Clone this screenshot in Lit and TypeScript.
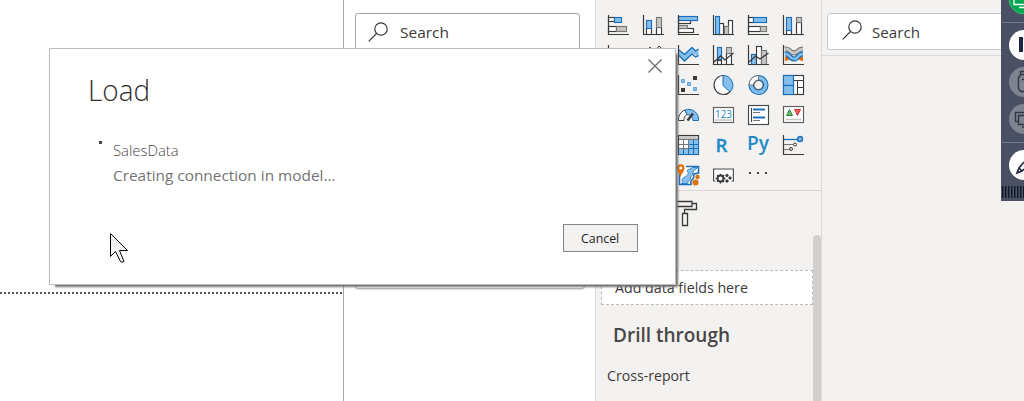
import { LitElement, html, svg, css } from "lit";
import { customElement } from "lit/decorators.js";

const D = "#3b3a39", B = "#1a6fb8", L = "#83beec", G = "#c8c6c4", M = "#797775", O = "#e07000";
const axis = svg`<path d="M.5 0V19.5H21" fill="none" stroke=${D} stroke-width="1.200"/>`;
const r = (x: number, y: number, w: number, h: number, f = "#fff", s = D) =>
  svg`<rect x=${x + 0.5} y=${y + 0.5} width=${w - 1} height=${h - 1} fill=${f} stroke=${s} stroke-width="1.150"/>`;

const icons = [
  svg`${r(0, 2, 7, 5)}${r(6, 2, 8, 6, L, B)}${r(0, 11, 9, 6)}${r(8, 11, 11, 6, G, M)}${axis}`,
  svg`${r(3, 12, 6, 8)}${r(3, 5, 6, 9, L, B)}${r(13, 12, 6, 8)}${r(13, 2, 6, 11, G, M)}${axis}`,
  svg`${r(0, 5, 13, 4)}${r(0, 1, 20, 5, L, B)}${r(0, 13, 16, 5)}${r(0, 10, 10, 4, G, M)}${axis}`,
  svg`${r(6, 8, 5, 12)}${r(2, 1, 5, 19, L, B)}${r(15, 5, 5, 15)}${r(11, 11, 5, 9, G, M)}${axis}`,
  svg`${r(0, 2, 6, 6)}${r(5, 2, 14, 6, L, B)}${r(0, 11, 13, 6)}${r(12, 11, 7, 6, G, M)}${axis}`,
  svg`${r(3, 15, 6, 5)}${r(3, 2, 6, 14, L, B)}${r(13, 7, 6, 13)}${r(13, 2, 6, 6, G, M)}${axis}`,
  svg`<path d="M1 15L7 8 12 13 20 7" fill="none" stroke=${B}/>${axis}`,
  svg`<path d="M1 12L7 2 11 7 16 1 20 5" fill="none" stroke=${D}/>`,
  svg`<path d="M1 5L6.5 9.5 14 2.5 17.5 6 20.5 3.5V13L17 9.5 14 9 6.500 16 1 10.500Z" fill=${L}/><path d="M1 5L6.500 9.500 14 2.500 17.500 6 20.500 4M1 10.500L6.500 16 14 9 17.500 12 20.500 10.500" fill="none" stroke=${B} stroke-width="1.300"/>${axis}`,
  svg`${r(4, 15, 5, 5)}${r(4, 2, 5, 13, L, B)}${r(13, 8, 6, 12)}${r(13, 2, 6, 7, G, M)}<path d="M1 17L7.500 11 12 15 20.500 8" fill="none" stroke=${D} stroke-width="1.300"/>${axis}`,
  svg`${r(3, 9, 6, 11, L, B)}${r(8, 1, 6, 19)}${r(13, 5, 6, 15, G, M)}<path d="M1 17L7.500 11 12 14 20.500 8" fill="none" stroke=${D} stroke-width="1.300"/>${axis}`,
  svg`<path d="M2 14C7 14 6 7 11 7S15 14 20 14" stroke=${O} stroke-width="4" fill="none"/><path d="M2 4C7 3 6 8 11 8S14 4 20 4" stroke=${M} stroke-width="5" fill="none"/><path d="M2 4C7 3 6 8 11 8S14 4 20 4" stroke=${G} stroke-width="3" fill="none"/><path d="M2 9C7 8 6 14 11 14S14 9 20 9" stroke=${B} stroke-width="5" fill="none"/><path d="M2 9C7 8 6 14 11 14S14 9 20 9" stroke=${L} stroke-width="2.500" fill="none"/>${axis}`,
  svg``,
  svg``,
  svg`<path d="M15 1h4v4h-4zM3 13h4v4H3z" fill=${D}/><g fill=${L} stroke="#4b98d2" stroke-width=".8"><path d="M3.500 4.500h3v3h-3zM9.500 7.500h3v3h-3zM15.500 12.500h3v3h-3z"/></g>${axis}`,
  svg`<circle cx="10.500" cy="10" r="9.500" fill="#fff"/><path d="M10 .5V10.500L17 17A9.700 9.700 0 0 0 10 .5Z" fill=${L} stroke=${B}/><path d="M10 .5A9.500 9.500 0 1 0 17 17" fill="none" stroke=${D} stroke-width="1.200"/>`,
  svg`<circle cx="10.500" cy="10" r="7.300" fill="none" stroke=${B} stroke-width="5.500"/><circle cx="10.500" cy="10" r="7.300" fill="none" stroke=${L} stroke-width="3.400"/><path d="M1 10A9.500 9.500 0 0 1 10.500.5V5A5 5 0 0 0 5.500 10Z" fill="#fff" stroke=${M}/><circle cx="10.500" cy="10" r="4.500" fill="none" stroke=${D} stroke-width=".7"/>`,
  svg`${r(0, 0, 21, 20)}<path d="M10 5.500H20M14.500 6V20M15 12.500H20" stroke=${D} fill="none"/>${r(0, 0, 11, 11, L, B)}${r(0, 10, 11, 10, L, B)}`,
  svg``,
  svg``,
  svg`<path d="M.5 15.500A10 10 0 0 1 7 5L9 9.500A6 6 0 0 0 6 15.500Z" fill="#fff" stroke=${D}/><path d="M7 5A10 10 0 0 1 20.500 15.500H15A6 6 0 0 0 9 9.500Z" fill=${L} stroke=${B}/><path d="M9.500 15.500L15 8.500" stroke=${D} stroke-width="2.500"/>`,
  svg`${r(0, 2, 21, 16, "#fff", "#605e5c")}<text x="10.500" y="13" font-size="10" textLength="17" lengthAdjust="spacingAndGlyphs" text-anchor="middle" fill="#2583c6" font-family="Open Sans">123</text><path d="M2 15H19" stroke=${G} stroke-width="1.500"/>`,
  svg`${r(0, 0, 21, 20, "#fff", "#484644")}<path d="M3.500 3V17" stroke=${D}/><path d="M5 4.500H17M5 12.500H17" stroke=${B} stroke-width="2"/><path d="M5 7.500H12M5 15.500H12" stroke=${M}/>`,
  svg`${r(0, 1, 21, 17, "#fff", "#605e5c")}<path d="M3.500 10.500L6.500 4.500 9.500 10.500Z" fill="#6db46d" stroke="#2e8a3a"/><path d="M11.500 4.500H17.500L14.500 10.500Z" fill="#e86060" stroke="#d13438"/><path d="M3 14.500H18" stroke=${G} stroke-width="1.500"/>`,
  svg``,
  svg``,
  svg`${r(0, 0, 21, 20)}<path d="M1 1H20V4H1Z" fill=${G}/><path d="M11 4H20V19H11ZM1 14H20V19H1Z" fill=${L}/><path d="M1 4.500H20M1 9.500H11M1 13.500H11M5.500 4V14M10.500 4V14" stroke=${M}/><path d="M11 9.500H20M11 13.500H20M15.500 4V19M5.500 14V19M10.500 14V19M20.500 4V19.500H1" stroke=${B} fill="none"/>`,
  svg`<text x="2.500" y="16.500" textLength="12" lengthAdjust="spacingAndGlyphs" font-size="18.500" font-weight="600" fill="#218ac8" stroke="#218ac8" stroke-width=".3" font-family="Open Sans">R</text>`,
  svg`<text x="-1" y="14.500" textLength="22" lengthAdjust="spacingAndGlyphs" font-size="19" font-weight="600" fill="#218ac8" font-family="Open Sans">Py</text>`,
  svg`${axis}<path d="M1 4.500H15" stroke=${B} stroke-width="1.300"/><path d="M1 9.500H10M1 14.500H6" stroke=${M}/><circle cx="17" cy="4" r="2.500" fill=${L} stroke=${B} stroke-width="1.400"/><circle cx="12" cy="9.500" r="1.500" fill="none" stroke=${D}/><circle cx="8" cy="14" r="1.500" fill="none" stroke=${D}/>`,
  svg``,
  svg``,
  svg`<path d="M1.500 8V19.500H13V16L15.500 13 16 9 20.500 8V1.500H8" fill="#fff" stroke=${B} stroke-width="1.600"/><path d="M3.500 18.500C6 17 2 15 6 12.500S11 9 9.500 6.500 14 4 14.500 2.500H19.500C18 5 15 5 15 8S12 11 12.500 13 10 15 9.500 18.500Z" fill=${L} stroke=${B} stroke-width=".8"/><path d="M2.500 12C1 8-1 6-1 3A3.700 3.700 0 0 1 6.500 3C6.500 6 4 8 2.500 12Z" fill=${O}/><circle cx="2.800" cy="3" r="1.500" fill="#fff"/><circle cx="19.500" cy="12" r="2.200" fill=${O}/><circle cx="17.500" cy="17.500" r="3" fill=${O}/>`,
  svg`<path d="M2.500 16H.6V4H20.400V16H18.500" fill="#fff" stroke="#504e4c" stroke-width="1.200"/><circle cx="7.500" cy="13.500" r="3" fill="none" stroke=${D} stroke-width="2"/><path d="M7.500 8.700v2M7.500 16.500v2M2.700 13.500h2M10.500 13.500h2M4.200 10.200l1.500 1.500M9.500 15.500l1.500 1.500M4.200 16.800l1.500-1.500M9.500 11.500l1.500-1.500" stroke=${D} stroke-width="1.500"/><path d="M14 8.500l2 2-2 2-2-2ZM14 14l2 2-2 2-2-2ZM17 11l2 2-2 2-2-2Z" fill=${D}/>`,
  svg`<path d="M1 7h2v2H1zM9 7h2v2H9zM17 7h2v2h-2z" fill="#484644"/>`,
];

const glass = html`<svg class="glass" width="20" height="20" viewBox="0 0 20 20" fill="none" stroke="#3b3a39" stroke-width="1.200"><circle cx="13" cy="7" r="6.200"/><path d="M8.500 11.500L.7 19.300"/></svg>`;

@customElement("app-root")
export class AppRoot extends LitElement {
  static styles = css`
    :host { display: block; position: relative; width: 1024px; height: 401px; overflow: hidden; background: #fff; color: #3b3a39; font: 15px "Open Sans", "Noto Sans", sans-serif; }
    * { box-sizing: border-box; }
    svg { display: block; flex: none; }
    .page { display: grid; grid-template-columns: 344px 251px 226px 203px; height: 401px; }
    .canvas { border-right: 1px solid #a6a6a6; }
    .guide { margin-top: 292px; height: 2px; background: repeating-linear-gradient(90deg, #555 0 2px, transparent 2px 4px); }
    .filters { padding: 13px 15px 0 11px; display: flex; flex-direction: column; }
    .search { height: 37px; background: #fff; border: 1px solid #a6a6a6; border-radius: 3px; display: flex; align-items: center; }
    .filters .search { padding-left: 12px; gap: 12px; }
    .word { display: block; white-space: nowrap; transform-origin: left center; }
    .card { margin: 7px -5px 0 0; height: 232px; border: 1px solid #b5b5b5; border-radius: 3px; box-shadow: 0 1px 1px #ddd; }
    .visuals { background: #f3f2f1; border-left: 1px solid #dddbd9; display: flex; flex-direction: column; }
    .icons { height: 191px; border-bottom: 1px solid #d8d6d4; padding: 15px 0 0 12px; display: grid; grid-template-columns: repeat(6, 35px); grid-auto-rows: 30px; }
    .icons svg { overflow: visible; }
    .tabs { height: 44px; padding: 9px 0 0 78px; }
    .lower { flex: 1; display: flex; justify-content: space-between; }
    .wells { width: 217px; padding: 35px 0 0 5px; }
    .drop { height: 35px; background: #fff; border: 1px dashed #bebbb8; padding: 7px 0 0 13px; line-height: 20px; font-size: 14.5px; }
    .heading { margin: 16px 0 0 12px; font-size: 20px; line-height: 28px; font-weight: 600; color: #484644; }
    .option { margin: 17px 0 0 6px; line-height: 20px; font-size: 14.5px; }
    .scroll { width: 8px; background: #d2d0ce; border-radius: 4px 4px 0 0; }
    .fields { background: #f3f2f1; border-left: 1px solid #dddbd9; }
    .finder { height: 56px; border-bottom: 1px solid #dddbd9; padding: 13px 0 0 5px; }
    .fields .search { padding-left: 14px; gap: 10px; border-color: #c8c6c4; }
    .fields .glass { margin-top: -3px; }
    .dialog { position: absolute; left: 49px; top: 48px; width: 627px; height: 237px; background: #fff; border: 1px solid #bdbdbd; box-shadow: 4px 4px 2px -2px #707070; padding: 22px 37px 0 38px; display: flex; flex-direction: column; }
    .title { font-size: 30px; line-height: 38px; font-weight: 300; color: #302e2d; }
    .job { display: flex; margin: 32px 0 0 11px; }
    .mark { width: 3px; height: 3px; background: #444; margin-right: 11px; }
    .lines { line-height: 25px; margin-top: -3px; color: #737373; }
    .name { color: #484848; font-size: 15px; font-weight: 300; }
    .cancel { align-self: flex-end; margin-top: 36px; width: 75px; height: 28px; padding: 0 0 0 17px; background: #f3f2f1; border: 1px solid #858585; border-radius: 0; color: #252423; font: 13px "Open Sans", sans-serif; text-align: left; }
    .close { position: absolute; right: 13px; top: 10px; }
    .pointer { position: absolute; left: 110px; top: 233px; }
    .tools { position: absolute; left: 1001px; top: 0; }
  `;

  word(text: string, scale: number) {
    return html`<span class="word" style="transform:scaleX(${scale})">${text}</span>`;
  }

  render() {
    return html`
      <div class="page">
        <div class="canvas"><div class="guide"></div></div>
        <div class="filters">
          <div class="search">${glass}${this.word("Search", 1.03)}</div>
          <div class="card"></div>
        </div>
        <div class="visuals">
          <div class="icons">${icons.map((i) => html`<svg width="21" height="20">${i}</svg>`)}</div>
          <div class="tabs"><svg width="24" height="28" fill="none" stroke="#3b3a39" stroke-width="1.300"><path d="M0 1.500H18V6.500H0M18 3.500H22.500V9.500H10.500V13.500M8.500 13.500H13.500V25.500H8.500Z"/></svg></div>
          <div class="lower">
            <div class="wells">
              <div class="drop">${this.word("Add data fields here", 0.98)}</div>
              <div class="heading">${this.word("Drill through", 0.95)}</div>
              <div class="option">${this.word("Cross-report", 0.975)}</div>
            </div>
            <div class="scroll"></div>
          </div>
        </div>
        <div class="fields"><div class="finder"><div class="search">${glass}${this.word("Search", 1.01)}</div></div></div>
      </div>
      <div class="dialog">
        <svg class="close" width="14" height="14" stroke="#6b6b6b" stroke-width="1.300"><path d="M.5.5L13.500 13.500M13.500.5L.5 13.500"/></svg>
        <div class="title">${this.word("Load", 0.93)}</div>
        <div class="job"><span class="mark"></span><div class="lines"><div class="name">${this.word("SalesData", 0.99)}</div>${this.word("Creating connection in model...", 1.025)}</div></div>
        <button class="cancel">${this.word("Cancel", 0.95)}</button>
      </div>
      <svg class="pointer" width="19" height="31"><path d="M.5.5V23.500L5.500 18.500 10.500 28.500Q12 30 14 28.500L9.500 17.500H17.500Z" fill="#f3f3f3" stroke="#000"/></svg>
      <svg class="tools" width="23" height="201">
        <path d="M0 0H23V201H0Z" fill="#4a5064"/>
        <circle cx="23" cy="-1" r="15" fill="#05a850" stroke="#35c878"/>
        <path d="M13 0V4.500H23M18 7.500H23" stroke="#fff" fill="none" stroke-width="1.300"/>
        <path d="M1 22.500H23M1 142.500H23" stroke="#6c7b96"/>
        <circle cx="23" cy="45" r="15" fill="#fff"/><path d="M18 37h4v15h-4z" fill="#1d2740"/>
        <circle cx="23" cy="82" r="15" fill="#7d8590"/><path d="M23 74.500H20L17.500 77.500V89L20 91.500H23M19.500 74V71.500H23M21 79.500H23" stroke="#303747" fill="none" stroke-width="1.400"/>
        <circle cx="23" cy="119" r="15" fill="#7d8590"/><path d="M17 121.500H14.500V112.500H23M23 115.500H17.500V124.500H23M21 127H23" stroke="#303747" fill="none" stroke-width="1.400"/>
        <circle cx="23" cy="165" r="15" fill="#fff"/><path d="M23 162L18 168L16 173L21 171L23 169M18 168L21 171" stroke="#1d2740" fill="none" stroke-width="1.600"/>
        <path d="M1 192H23" stroke="#151c2c" stroke-width="12" stroke-dasharray="1.500 1.500"/>
      </svg>`;
  }
}
